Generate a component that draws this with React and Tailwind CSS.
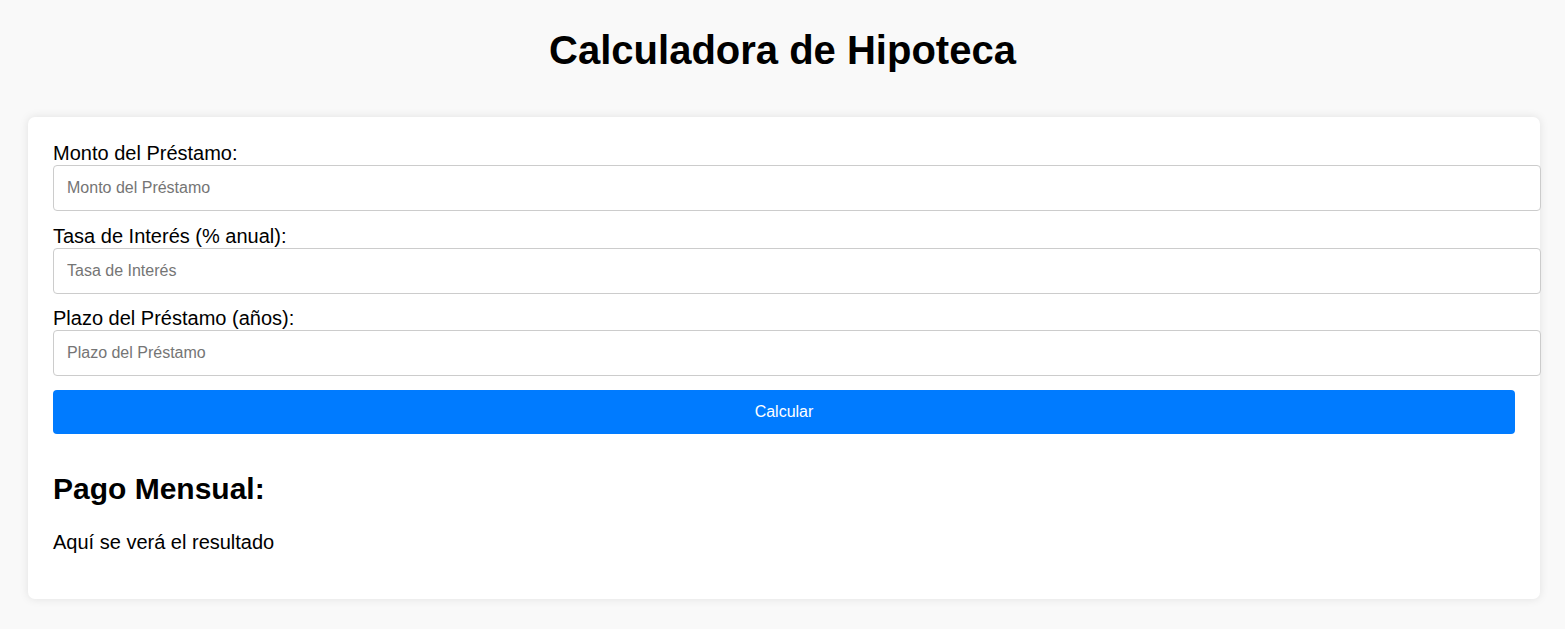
export default function App() {
  const fields = [
    { label: "Monto del Préstamo:", ph: "Monto del Préstamo" },
    { label: "Tasa de Interés (% anual):", ph: "Tasa de Interés" },
    { label: "Plazo del Préstamo (años):", ph: "Plazo del Préstamo" },
  ];
  return (
    <div className="min-h-[629px] bg-[#f9f9f9] text-black font-['Liberation_Sans',Arial,sans-serif] text-[20px] overflow-hidden">
      <h1 className="pt-[27px] text-center text-[40px] font-bold leading-[46px]">
        Calculadora de Hipoteca
      </h1>
      <div className="mt-[44px] ml-[28px] w-[1512px] bg-white rounded-[7px] shadow-[0_0_10px_rgba(0,0,0,0.1)] p-[25px]">
        {fields.map((f) => (
          <div key={f.label}>
            <label className="block leading-[23px]">{f.label}</label>
            <input
              type="text"
              placeholder={f.ph}
              className="block w-[1488px] h-[46px] mb-[13.5px] px-[13px] border border-[#cccccc] rounded-[4px] bg-white text-[16px] leading-[18px] placeholder:text-[#757575] outline-none"
            />
          </div>
        ))}
        <button className="block w-full h-[44px] bg-[#007bff] text-white text-[16px] rounded-[4px]">
          Calcular
        </button>
        <h2 className="mt-[38px] text-[30px] font-bold leading-[34px]">Pago Mensual:</h2>
        <p className="mt-[25px] mb-[20px] leading-[23px]">Aquí se verá el resultado</p>
      </div>
    </div>
  );
}
